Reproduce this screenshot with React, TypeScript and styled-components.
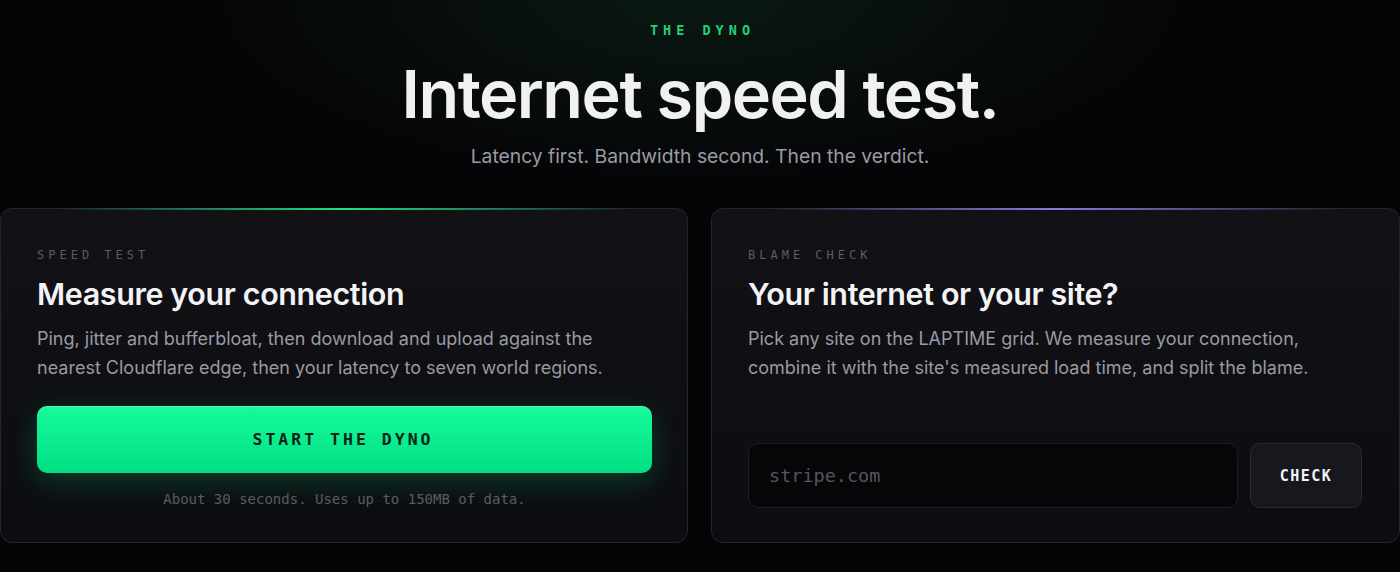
import React from "react";
import styled, { createGlobalStyle } from "styled-components";

const GlobalStyle = createGlobalStyle`
    html, body {
        margin: 0;
        padding: 0;
        background: #050507;
    }
    * {
        box-sizing: border-box;
    }
`;

const mono = `"DejaVu Sans Mono", "Liberation Mono", monospace`;
const sans = `Inter, "Noto Sans", sans-serif`;

const Page = styled.div`
    min-height: 572px;
    padding: 22px 0 30px;
    font-family: ${sans};
    background:
        radial-gradient(ellipse 700px 260px at 50% 0%, rgba(20, 60, 38, 0.35), transparent 70%),
        #050507;
`;

const Hero = styled.header`
    display: flex;
    flex-direction: column;
    align-items: center;
`;

const Eyebrow = styled.div`
    font-family: ${mono};
    font-size: 13.5px;
    font-weight: 600;
    letter-spacing: 5px;
    color: #1fd27a;
    line-height: 16px;
    padding-left: 5px;
`;

const Title = styled.h1`
    margin: 16px 0 0;
    font-size: 66.5px;
    font-weight: 600;
    letter-spacing: -1.5px;
    line-height: 80px;
    color: #f1f1f4;
`;

const Subtitle = styled.p`
    margin: 10px 0 0;
    font-size: 19.3px;
    line-height: 24px;
    color: #9b9ba4;
`;

const Cards = styled.div`
    display: grid;
    grid-template-columns: 688px 689px;
    gap: 23px;
    margin-top: 40px;
`;

const Card = styled.section<{ $accent: string }>`
    position: relative;
    display: flex;
    flex-direction: column;
    height: 335px;
    padding: 39px 37px 34px 36px;
    background: linear-gradient(180deg, #111116 0%, #0c0d11 100%);
    border: 1px solid #25252b;
    border-radius: 12px;

    &::before {
        content: "";
        position: absolute;
        top: -1px;
        left: 8%;
        right: 8%;
        height: 2px;
        background: linear-gradient(90deg, transparent, ${p => p.$accent}, transparent);
    }
`;

const Label = styled.div`
    font-family: ${mono};
    font-size: 12px;
    letter-spacing: 4px;
    color: #5c5c64;
    line-height: 14px;
`;

const CardTitle = styled.h2`
    margin: 14px 0 0;
    font-size: 30.5px;
    font-weight: 600;
    letter-spacing: -0.4px;
    line-height: 36px;
    color: #f3f3f5;
`;

const Desc = styled.p`
    margin: 12px 0 0;
    max-width: 580px;
    font-size: 18px;
    line-height: 29px;
    color: #9a9aa3;
`;

const StartButton = styled.button`
    margin-top: 24px;
    width: 615px;
    height: 68px;
    border: none;
    border-radius: 10px;
    background: linear-gradient(180deg, #17fb9c 0%, #00df83 100%);
    box-shadow: 0 8px 30px rgba(0, 230, 130, 0.22), inset 0 1px 0 rgba(255, 255, 255, 0.25);
    font-family: ${mono};
    font-size: 16.5px;
    font-weight: 700;
    letter-spacing: 3px;
    padding-left: 3px;
    color: #07241a;
    cursor: pointer;
`;

const Note = styled.div`
    margin-top: 18px;
    width: 615px;
    text-align: center;
    font-family: ${mono};
    font-size: 14px;
    color: #5b5b64;
    line-height: 17px;
`;

const CheckRow = styled.div`
    margin-top: auto;
    display: flex;
    gap: 12px;
`;

const SiteInput = styled.input`
    width: 490px;
    height: 65px;
    padding: 0 20px;
    background: #060608;
    border: 1px solid #1e1e23;
    border-radius: 10px;
    font-family: ${mono};
    font-size: 18.5px;
    color: #e5e5e8;
    outline: none;

    &::placeholder {
        color: #55555d;
    }
`;

const CheckButton = styled.button`
    width: 112px;
    height: 65px;
    background: #17181d;
    border: 1px solid #2a2a31;
    border-radius: 10px;
    font-family: ${mono};
    font-size: 15px;
    font-weight: 700;
    letter-spacing: 1.5px;
    color: #f3f3f5;
    cursor: pointer;
`;

export default function App() {
    return <>
        <GlobalStyle />
        <Page>
            <Hero>
                <Eyebrow>THE DYNO</Eyebrow>
                <Title>Internet speed test.</Title>
                <Subtitle>Latency first. Bandwidth second. Then the verdict.</Subtitle>
            </Hero>
            <Cards>
                <Card $accent="#1fe08a">
                    <Label>SPEED TEST</Label>
                    <CardTitle>Measure your connection</CardTitle>
                    <Desc>Ping, jitter and bufferbloat, then download and upload against the nearest Cloudflare edge, then your latency to seven world regions.</Desc>
                    <StartButton>START THE DYNO</StartButton>
                    <Note>About 30 seconds. Uses up to 150MB of data.</Note>
                </Card>
                <Card $accent="#8b78d8">
                    <Label>BLAME CHECK</Label>
                    <CardTitle>Your internet or your site?</CardTitle>
                    <Desc>Pick any site on the LAPTIME grid. We measure your connection, combine it with the site's measured load time, and split the blame.</Desc>
                    <CheckRow>
                        <SiteInput placeholder="stripe.com" />
                        <CheckButton>CHECK</CheckButton>
                    </CheckRow>
                </Card>
            </Cards>
        </Page>
    </>;
}
